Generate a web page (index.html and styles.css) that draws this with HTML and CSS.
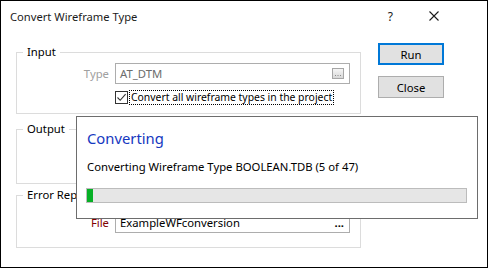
FILE: index.html
```html
<!DOCTYPE html>
<html lang="en">
<head>
  <meta charset="UTF-8" />
  <title>Convert Wireframe Type</title>
  <link rel="stylesheet" href="styles.css">
</head>
<body>

  <div class="window">

    <!-- TITLE BAR -->
    <div class="titlebar">
      <span class="title">Convert Wireframe Type</span>
      <span class="help">?</span>
      <svg class="close-icon" viewBox="0 0 10 10">
        <path d="M0.5 0.5 L9.5 9.5 M9.5 0.5 L0.5 9.5" stroke="#1b1b1b" stroke-width="1.1" fill="none" />
      </svg>
    </div>

    <div class="body">
      <div class="groups">

        <fieldset class="group group-input">
          <legend>Input</legend>
          <div class="field-row">
            <span class="field-label disabled">Type</span>
            <div class="textbox disabled">
              <span class="value">AT_DTM</span>
              <svg class="browse-icon" viewBox="0 0 12 11">
                <defs>
                  <linearGradient id="bg" x1="0" y1="0" x2="0" y2="1">
                    <stop offset="0" stop-color="#f7f7f7" />
                    <stop offset="1" stop-color="#d6d6d6" />
                  </linearGradient>
                </defs>
                <rect x="0.5" y="0.5" width="11" height="10" fill="url(#bg)" stroke="#a6a6a6" />
                <rect x="3" y="7" width="1" height="1" fill="#8a8a8a" />
                <rect x="5.5" y="7" width="1" height="1" fill="#8a8a8a" />
                <rect x="8" y="7" width="1" height="1" fill="#8a8a8a" />
              </svg>
            </div>
          </div>
          <div class="check-row">
            <span class="checkbox">
              <svg viewBox="0 0 11 11"><path d="M1.5 5.5 L4.2 8.3 L9.6 2.2" stroke="#333" stroke-width="1.1" fill="none" /></svg>
            </span>
            <span class="check-label">Convert all wireframe types in the project</span>
          </div>
        </fieldset>

        <fieldset class="group group-output">
          <legend>Output</legend>
        </fieldset>

        <fieldset class="group group-error">
          <legend>Error Report</legend>
          <div class="field-row error-row">
            <span class="field-label required">File</span>
            <div class="textbox">
              <span class="value">ExampleWFconversion</span>
              <span class="browse-dots">...</span>
            </div>
          </div>
        </fieldset>

      </div>

      <div class="buttons">
        <button class="btn btn-default">Run</button>
        <button class="btn">Close</button>
      </div>
    </div>

    <!-- PROGRESS POPUP -->
    <div class="progress-dialog">
      <div class="progress-heading">Converting</div>
      <div class="progress-text">Converting Wireframe Type BOOLEAN.TDB (5 of 47)</div>
      <div class="progress-bar"><div class="progress-fill" style="width:6px;"></div></div>
    </div>

  </div>

</body>
</html>
```

FILE: styles.css
```css
* { box-sizing: border-box; }
body { margin: 0; font-family: "Noto Sans", sans-serif; font-size: 11.3px; color: #000; background: #fff; }

.window { width: 488px; height: 268px; border: 1px solid #000; position: relative; background: #fff; }

.titlebar { height: 30px; display: flex; align-items: center; padding-left: 9px; }
.title { flex: 1; font-size: 11.2px; color: #1b1b1b; }
.help { margin-right: 36px; font-size: 12px; color: #1b1b1b; }
.close-icon { width: 10px; height: 10px; margin-right: 48px; }

.body { display: flex; padding: 12px 0 0 15px; }
.groups { width: 345px; display: flex; flex-direction: column; padding-top: 1px; }

.group { margin: 0; padding: 0; border: 1px solid #dcdcdc; }
.group legend { margin-left: 6px; padding: 0 4px; line-height: 16px; height: 16px; white-space: nowrap; }
.group-input { height: 70px; }
.group-output { height: 63px; margin-top: 7px; }
.group-error { height: 61px; margin-top: 3px; }

.field-row { display: flex; align-items: center; margin-top: 3px; }
.error-row { margin-top: 9px; }
.field-label { width: 92px; margin-right: 6px; text-align: right; }
.field-label.disabled { color: #a0a0a0; }
.field-label.required { color: #800000; }

.textbox { width: 235px; height: 21px; border: 1px solid #adadad; display: flex; align-items: center; padding-left: 4px; white-space: nowrap; }
.textbox.disabled .value { color: #6d6d6d; }
.browse-icon { margin-left: auto; margin-right: 5px; width: 12px; height: 11px; }
.browse-dots { margin-left: auto; margin-right: 5px; font-weight: bold; line-height: 10px; }

.check-row { display: flex; align-items: center; margin-top: 6px; padding-left: 98px; }
.checkbox { width: 13px; height: 13px; border: 1px solid #333; display: flex; }
.checkbox svg { width: 11px; height: 11px; }
.check-label { margin-left: 1px; height: 15px; line-height: 13px; padding: 0 1px; border: 1px dotted #000; white-space: nowrap; font-size: 10.4px; }

.buttons { display: flex; flex-direction: column; gap: 11px; margin-left: 17px; }
.btn { width: 66px; height: 22px; padding: 0; border: 1px solid #adadad; background: #e1e1e1; font: inherit; color: #000; }
.btn-default { border: 2px solid #0078d7; }

.progress-dialog {
  position: absolute; left: 75px; top: 115px; width: 402px; height: 103px;
  border: 1px solid #6d6d6d; background: #fff; padding: 11px 0 0 10px;
}
.progress-heading { font-size: 14.8px; line-height: 21px; color: #1538c0; }
.progress-text { margin-top: 10px; line-height: 16px; white-space: nowrap; }
.progress-bar { margin: 13px 0 0 -1px; width: 381px; height: 15px; border: 1px solid #bcbcbc; background: #e6e6e6; }
.progress-fill { height: 13px; background: #06b025; }
```
